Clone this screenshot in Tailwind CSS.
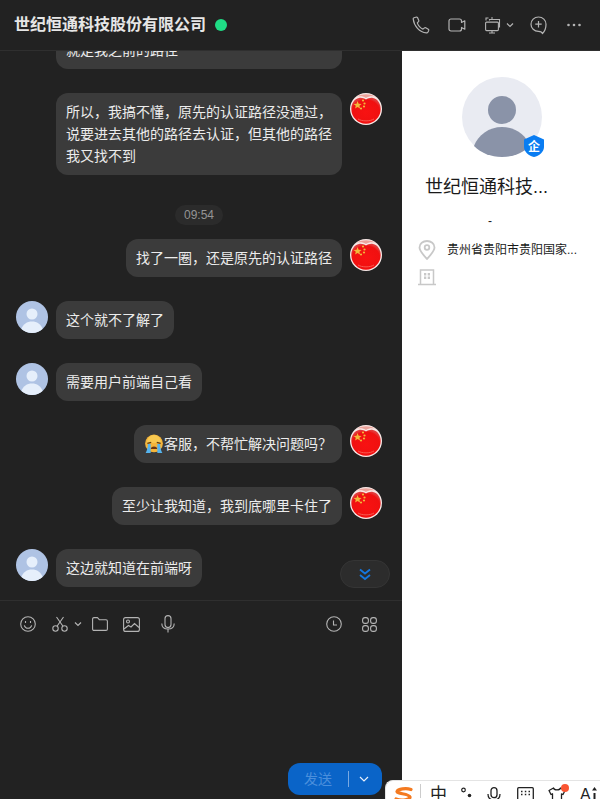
<!DOCTYPE html>
<html lang="zh-CN">
<head>
    <meta charset="UTF-8">
    <title>世纪恒通科技股份有限公司</title>
    <script src="https://cdn.jsdelivr.net/npm/@tailwindcss/browser@4"></script>
</head>
<body class="bg-[#222222] overflow-hidden font-['Liberation_Sans','Noto_Sans_CJK_SC',sans-serif]">
    <svg width="0" height="0" class="absolute">
        <defs>
            <radialGradient id="flagRed" cx="50%" cy="55%" r="55%">
                <stop offset="0%" stop-color="#f81212"/>
                <stop offset="85%" stop-color="#f01010"/>
                <stop offset="100%" stop-color="#e23a3a"/>
            </radialGradient>
            <symbol id="flagAvatar" viewBox="0 0 32 32">
                <circle cx="16" cy="16" r="16" fill="#f8e8e6"/>
                <path d="M16 30.700C8 30.700 1.300 24 1.300 16C1.300 10 4.500 6 9 5C12 4.500 14 5.500 16 6.500C18 5.500 20 4.500 23 5C27.500 6 30.700 10 30.700 16C30.700 24 24 30.700 16 30.700Z" fill="url(#flagRed)"/>
                <path d="M7 3.500C12 .6 20 .6 25 3.500C21 3 18 3.500 16 5C14 3.500 11 3 7 3.500Z" fill="#eba39b"/>
                <path d="M7.500 8l1.200 2.700 2.900.2-2.200 1.800.7 2.800-2.600-1.500-2.400 1.500.7-2.800-2.200-1.800 2.900-.2z" fill="#f2b83a"/>
                <circle cx="13" cy="7.500" r="1.100" fill="#f2b83a"/>
                <circle cx="14.500" cy="10.500" r="1.100" fill="#f2b83a"/>
                <circle cx="14" cy="13.500" r="1.100" fill="#f2b83a"/>
                <circle cx="11" cy="15.500" r="1.100" fill="#f2b83a"/>
                <path d="M8 26C12 28.500 20 28.500 24 26" stroke="#f85a50" stroke-width="1" fill="none"/>
            </symbol>
            <symbol id="userAvatar" viewBox="0 0 32 32">
                <circle cx="16" cy="16" r="16" fill="#afc3e4"/>
                <circle cx="16" cy="13" r="5.500" fill="#e6effb"/>
                <path d="M5.500 28C7 23 11 20.500 16 20.500C21 20.500 25 23 26.500 28C23.500 30.500 20 32 16 32C12 32 8.500 30.500 5.500 28Z" fill="#e6effb"/>
            </symbol>
        </defs>
    </svg>

    <div class="relative w-[600px] h-[799px] flex flex-col overflow-hidden">
        <!-- top bar -->
        <header class="h-[51px] shrink-0 flex items-center justify-between pl-[14px] pr-[19px] border-b border-[#2f2f2f] bg-[#222222] z-10">
            <div class="flex items-center gap-[9px]">
                <h1 class="text-[16px] font-bold text-[#e6e6e6] leading-none">世纪恒通科技股份有限公司</h1>
                <span class="w-3 h-3 rounded-full bg-[#1fdc85]"></span>
            </div>
            <div class="flex items-center text-[#b4b4b4]">
                <svg class="w-[18px] h-[18px] mr-[18px]" viewBox="0 0 18 18" fill="none" stroke="currentColor" stroke-width="1.200" stroke-linejoin="round"><path d="M2 1.800L4.600 1C5 1 5.300 1.200 5.500 1.600L6.800 4.500C7 5 6.800 5.400 6.500 5.700L5.300 6.900C6.200 9.500 8.300 12 11 13.100L12.400 11.900C12.800 11.600 13.200 11.500 13.700 11.800L16.300 13.300C16.700 13.600 16.900 14 16.700 14.500L16 16C15.700 16.600 15.100 17 14.400 16.900C7.500 16.200 2 10 1.200 3C1.100 2.500 1.500 2 2 1.800Z"/></svg>
                <svg class="w-[18px] h-[14px] mr-[19px]" viewBox="0 0 18 14" fill="none" stroke="currentColor" stroke-width="1.200" stroke-linejoin="round"><path d="M3 1H11.500C12.800 1 13.500 1.800 13.500 3V4.500L16.800 2.800V11.200L13.500 9.500V11C13.500 12.200 12.800 13 11.500 13H3C1.800 13 1 12.200 1 11V3C1 1.800 1.800 1 3 1Z"/></svg>
                <svg class="w-[16px] h-[17px] mr-[5px]" viewBox="0 0 16 17" fill="none" stroke="currentColor" stroke-width="1.100"><path d="M1 3.500V1H3.500M6 1H8M4.500 3.600V2.500H14.500V10H13"/><rect x=".6" y="5.100" width="12.800" height="8.500" rx="1"/><path d="M4 16H10M7 13.600V16"/></svg>
                <svg class="w-2 h-2 mr-[16px]" viewBox="0 0 8 8" fill="none" stroke="currentColor" stroke-width="1.200"><path d="M1 2.500L4 5.500L7 2.500"/></svg>
                <svg class="w-[17px] h-[19px] mr-[20px]" viewBox="0 0 17 19" fill="none" stroke="currentColor" stroke-width="1.200" stroke-linejoin="round"><path d="M8.500 1C12.800 1 16 4.100 16 8.200C16 11.500 14.500 15.500 12.500 17.500C12 15.500 11 15.300 8.500 15.300C4.200 15.300 1 12.200 1 8.200C1 4.100 4.200 1 8.500 1Z"/><path d="M8.500 5V11.500M5.300 8.200H11.700"/></svg>
                <svg class="w-[14px] h-[4px]" viewBox="0 0 14 4" fill="currentColor"><circle cx="1.500" cy="2" r="1.300"/><circle cx="7" cy="2" r="1.300"/><circle cx="12.500" cy="2" r="1.300"/></svg>
            </div>
        </header>

        <div class="flex-1 flex min-h-0">
            <!-- conversation -->
            <main class="w-[402px] shrink-0 flex flex-col min-h-0">
                <section class="relative h-[549px] shrink-0 overflow-hidden">
                    <div class="-mt-[18px] flex flex-col gap-6 text-[14px] leading-[22px] text-[#ececec]">
                        <div class="flex justify-end pr-[60px]">
                            <p class="w-[286px] h-[36px] pt-[6px] px-[10px] rounded-b-xl bg-[#3b3b3b]">就是我之前的路径</p>
                        </div>
                        <div class="flex justify-end gap-2 pr-5">
                            <p class="w-[286px] py-2 px-[10px] rounded-xl bg-[#3b3b3b]">所以，我搞不懂，原先的认证路径没通过，说要进去其他的路径去认证，但其他的路径我又找不到</p>
                            <svg class="w-8 h-8 shrink-0"><use href="#flagAvatar"/></svg>
                        </div>
                        <div class="flex justify-center h-5 mt-[6px] mb-[-10px]">
                            <span class="h-5 px-[9px] rounded-[10px] bg-[#2b2b2b] text-[12px] leading-5 text-[#949494] ml-[-4px]">09:54</span>
                        </div>
                        <div class="flex justify-end gap-2 pr-5">
                            <p class="py-2 px-[10px] rounded-xl bg-[#3b3b3b]">找了一圈，还是原先的认证路径</p>
                            <svg class="w-8 h-8 shrink-0"><use href="#flagAvatar"/></svg>
                        </div>
                        <div class="flex gap-2 pl-4">
                            <svg class="w-8 h-8 shrink-0"><use href="#userAvatar"/></svg>
                            <p class="py-2 px-[10px] rounded-xl bg-[#3b3b3b]">这个就不了解了</p>
                        </div>
                        <div class="flex gap-2 pl-4">
                            <svg class="w-8 h-8 shrink-0"><use href="#userAvatar"/></svg>
                            <p class="py-2 px-[10px] rounded-xl bg-[#3b3b3b]">需要用户前端自己看</p>
                        </div>
                        <div class="flex justify-end gap-2 pr-5">
                            <p class="py-2 px-[10px] rounded-xl bg-[#3b3b3b] flex items-center">
                                <svg class="w-5 h-5 -my-px shrink-0" viewBox="0 0 18 18">
                                    <circle cx="9" cy="8.500" r="8" fill="#f5b53a"/>
                                    <path d="M2.500 8C3 3.500 6 1 9 1C12 1 15 3.500 15.500 8" fill="#f8c850"/>
                                    <path d="M3 8.500L6.500 7.500M11.500 7.500L15 8.500" stroke="#5d3a16" stroke-width="1.200" fill="none"/>
                                    <path d="M6 13.500C6.500 10.500 11.500 10.500 12 13.500Z" fill="#6b3513"/>
                                    <path d="M3.500 9H6V17H1.500C2.500 15 3.500 13 3.500 9ZM12 9H14.500C14.500 13 15.500 15 16.500 17H12Z" fill="#56b4ee"/>
                                </svg>客服，不帮忙解决问题吗？
                            </p>
                            <svg class="w-8 h-8 shrink-0"><use href="#flagAvatar"/></svg>
                        </div>
                        <div class="flex justify-end gap-2 pr-5">
                            <p class="py-2 px-[10px] rounded-xl bg-[#3b3b3b]">至少让我知道，我到底哪里卡住了</p>
                            <svg class="w-8 h-8 shrink-0"><use href="#flagAvatar"/></svg>
                        </div>
                        <div class="flex gap-2 pl-4">
                            <svg class="w-8 h-8 shrink-0"><use href="#userAvatar"/></svg>
                            <p class="py-2 px-[10px] rounded-xl bg-[#3b3b3b]">这边就知道在前端呀</p>
                        </div>
                    </div>
                    <button class="absolute left-[340px] top-[509px] w-[50px] h-[28px] rounded-[14px] bg-[#2c2c2c] border border-[#353535] flex items-center justify-center">
                        <svg class="w-[12px] h-[13px]" viewBox="0 0 12 13" fill="none" stroke="#1577e0" stroke-width="1.800"><path d="M1 1.500L6 5.500L11 1.500M1 7L6 11L11 7"/></svg>
                    </button>
                </section>

                <!-- input toolbar -->
                <section class="flex-1 border-t border-[#2f2f2f] flex flex-col justify-between pb-1 pr-5 min-h-0">
                    <div class="h-[46px] flex items-center justify-between pl-5 pr-[5px] text-[#b4b4b4]">
                        <div class="flex items-center">
                            <svg class="w-4 h-4 mr-4" viewBox="0 0 16 16" fill="none" stroke="currentColor" stroke-width="1.100"><circle cx="8" cy="8" r="7.300"/><path d="M4.300 9.300C5 11.500 6.500 12.300 8 12.300C9.500 12.300 11 11.500 11.700 9.300"/><path d="M5.500 5V7M10.500 5V7"/></svg>
                            <svg class="w-4 h-4" viewBox="0 0 16 16" fill="none" stroke="currentColor" stroke-width="1.100"><circle cx="3.500" cy="12.500" r="2.700"/><circle cx="12.500" cy="12.500" r="2.700"/><path d="M5 10.300L11.500 1M11 10.300L4.500 1"/></svg>
                            <svg class="w-2 h-2 ml-[6px] mr-[10px]" viewBox="0 0 8 8" fill="none" stroke="currentColor" stroke-width="1.200"><path d="M1 2.500L4 5.500L7 2.500"/></svg>
                            <svg class="w-4 h-[14px] mr-[15px]" viewBox="0 0 16 14" fill="none" stroke="currentColor" stroke-width="1.100" stroke-linejoin="round"><path d="M.6 2C.6 1.200 1.200.6 2 .6H5.500L7.500 2.800H14C14.800 2.800 15.400 3.400 15.400 4.200V12C15.400 12.800 14.800 13.400 14 13.400H2C1.200 13.400.6 12.800.6 12Z"/></svg>
                            <svg class="w-[17px] h-[15px] mr-[21px]" viewBox="0 0 17 15" fill="none" stroke="currentColor" stroke-width="1.100"><rect x=".6" y=".6" width="15.800" height="13.800" rx="2"/><circle cx="5" cy="4.500" r="1.500"/><path d="M1 12L5.500 8.500L8 10L11.500 6.500L16 10.500"/></svg>
                            <svg class="w-[14px] h-[18px]" viewBox="0 0 14 18" fill="none" stroke="currentColor" stroke-width="1.100"><rect x="4" y=".6" width="6" height="12" rx="3"/><path d="M.8 8.500C.8 12 3.500 14 7 14C10.500 14 13.200 12 13.200 8.500M7 14V17.500"/></svg>
                        </div>
                        <div class="flex items-center">
                            <svg class="w-4 h-4 mr-[20px]" viewBox="0 0 16 16" fill="none" stroke="currentColor" stroke-width="1.100"><circle cx="8" cy="8" r="7.300"/><path d="M7.500 4.500V9H11"/></svg>
                            <svg class="w-[15px] h-[15px]" viewBox="0 0 15 15" fill="none" stroke="currentColor" stroke-width="1.100"><rect x=".6" y=".6" width="5.800" height="5.800" rx="2.400"/><rect x="8.600" y=".6" width="5.800" height="5.800" rx="2.400"/><rect x=".6" y="8.600" width="5.800" height="5.800" rx="2.400"/><rect x="8.600" y="8.600" width="5.800" height="5.800" rx="2.400"/></svg>
                        </div>
                    </div>
                    <div class="flex justify-end">
                        <button class="w-[94px] h-8 rounded-xl bg-[#0a64c8] flex items-center pl-4 text-[14px] text-[#4a8fdc]">
                            发送
                            <span class="ml-[16px] w-px h-[16px] bg-[#79a9e2]"></span>
                            <svg class="w-[10px] h-[10px] ml-[10px]" viewBox="0 0 10 10" fill="none" stroke="#e8f0fb" stroke-width="1.200"><path d="M1 3L5 7L9 3"/></svg>
                        </button>
                    </div>
                </section>
            </main>

            <!-- profile panel -->
            <aside class="flex-1 bg-white pt-[26px] text-[#1a1a1a]">
                <div class="relative mx-auto w-20 h-20 ml-[60px]">
                    <svg class="w-20 h-20" viewBox="0 0 80 80">
                        <circle cx="40" cy="40" r="40" fill="#e9ebf2"/>
                        <circle cx="40" cy="33" r="14" fill="#8a93a8"/>
                        <path d="M12 69C16 58 27 50 40 50C53 50 64 58 68 69C61 76 51 80 40 80C29 80 19 76 12 69Z" fill="#8a93a8"/>
                    </svg>
                    <svg class="absolute left-[62px] top-[58px] w-5 h-[22px]" viewBox="0 0 20 22">
                        <path d="M10 0L20 4.500V12C20 17 15 21 10 22C5 21 0 17 0 12V4.500Z" fill="#0a7df2"/>
                        <text x="10" y="15.500" text-anchor="middle" font-size="12" font-weight="700" fill="#fff" font-family="'Noto Sans CJK SC',sans-serif">企</text>
                    </svg>
                </div>
                <h2 class="mt-[17px] pl-[23px] text-[18px] leading-[26px]">世纪恒通科技...</h2>
                <p class="mt-[13px] pl-[86px] text-[12px] leading-4">-</p>
                <div class="mt-[11px] pl-4 flex items-center gap-[11px] h-[20px]">
                    <svg class="w-[18px] h-5 shrink-0" viewBox="0 0 18 20" fill="none" stroke="#c8c8c8" stroke-width="1.800"><path d="M9 19C5 14.500 1.500 11 1.500 7.500C1.500 3.500 5 1 9 1C13 1 16.500 3.500 16.500 7.500C16.500 11 13 14.500 9 19Z"/><circle cx="9" cy="7.500" r="2.300"/></svg>
                    <span class="text-[12px] leading-5">贵州省贵阳市贵阳国家...</span>
                </div>
                <div class="mt-[8px] pl-4 flex">
                    <svg class="w-[18px] h-[18px]" viewBox="0 0 18 18" fill="none" stroke="#c8c8c8" stroke-width="1.500"><path d="M2.500 16V2H15.500V16M0 16.500H18"/><path d="M6 5H8.300V7.500H6ZM9.700 5H12V7.500H9.700ZM6 8.500H8.300V11H6ZM9.700 8.500H12V11H9.700Z" fill="#c8c8c8" stroke="none"/></svg>
                </div>
            </aside>
        </div>

        <!-- input method bar sitting over the page -->
        <div class="absolute left-[385px] top-[780px] w-[215px] h-[19px] bg-white border-t border-l border-[#e4e4e4] rounded-tl-lg flex items-start overflow-hidden pt-[6px]">
            <svg class="ml-2 w-[19px] h-[15px] shrink-0" viewBox="0 0 19 15" fill="none" stroke="#f47a20" stroke-width="3.200" stroke-linecap="round"><path d="M17 2.500C12 .8 4 2 3 4.500C2.500 7 15 6.500 16 10C16.500 12.500 8 14.500 2 12"/></svg>
            <span class="ml-[7px] w-px h-[14px] bg-[#cccccc] -mt-[3px]"></span>
            <span class="ml-[9px] text-[17px] leading-[18px] text-[#222222] -mt-[1px]">中</span>
            <svg class="ml-[14px] w-3 h-[14px] shrink-0" viewBox="0 0 12 14" fill="#222222"><circle cx="2.500" cy="3" r="1.800" fill="none" stroke="#222222" stroke-width="1.200"/><circle cx="8.500" cy="8.500" r="1.800"/></svg>
            <svg class="ml-[14px] w-[14px] h-4 shrink-0" viewBox="0 0 14 16" fill="none" stroke="#222222" stroke-width="1.300"><rect x="4" y=".7" width="6" height="10" rx="3"/><path d="M1 7C1 11 3.500 13 7 13C10.500 13 13 11 13 7"/></svg>
            <svg class="ml-[16px] w-[17px] h-[15px] shrink-0" viewBox="0 0 17 15" fill="none" stroke="#222222" stroke-width="1.300"><rect x=".7" y=".7" width="15.600" height="15" rx="1"/><path d="M4 4.500H5.500M7.800 4.500H9.300M11.500 4.500H13M4 7.500H5.500M7.800 7.500H9.300M11.500 7.500H13"/></svg>
            <span class="relative ml-[14px] w-[18px] h-4 shrink-0">
                <svg class="w-[18px] h-4" viewBox="0 0 18 16" fill="none" stroke="#222222" stroke-width="1.300" stroke-linejoin="round"><path d="M5.500 1L1 3.500L3 7.500L4.500 6.800V16H13.500V6.800L15 7.500L17 3.500L12.500 1C12 3.500 6 3.500 5.500 1Z"/></svg>
                <span class="absolute left-[13px] -top-[3px] w-2 h-2 rounded-full bg-[#fa5532]"></span>
            </span>
            <span class="ml-[14px] text-[16px] leading-[18px] text-[#222222] -mt-[1px]">A</span>
            <svg class="ml-px w-[5px] h-[14px] shrink-0" viewBox="0 0 5 14" fill="#222222"><rect x="1.500" y="6" width="2" height="8"/><path d="M2.500 0L5 3.500H0Z"/></svg>
        </div>
    </div>
</body>
</html>
